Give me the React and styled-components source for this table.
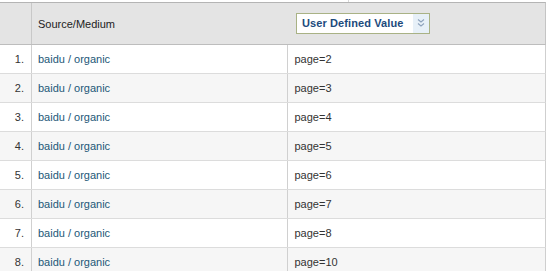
import React from "react";
import styled, { createGlobalStyle } from "styled-components";

const Global = createGlobalStyle`
  html, body { margin: 0; padding: 0; background: #fff; }
  body { font-family: "Liberation Sans", Arial, sans-serif; font-size: 11px; color: #333; }
`;

const Wrap = styled.div`
  width: 546px;
`;

const TopStrip = styled.div`
  height: 2px;
  display: flex;
`;

const Tick = styled.div`
  margin-left: 348px;
  width: 1px;
  height: 2px;
  background: #d8d8d8;
`;

const Header = styled.div`
  display: flex;
  height: 43px;
  box-sizing: border-box;
  background: #e4e4e4;
  border-top: 1px solid #b4b4b4;
  border-bottom: 1px solid #bdbdbd;
  border-right: 1px solid #c4c4c4;
`;

const HeadNum = styled.div`
  width: 32px;
  box-sizing: border-box;
  border-right: 1px solid #c8c8c8;
`;

const HeadCell = styled.div`
  width: ${(p) => p.$w}px;
  box-sizing: border-box;
  display: flex;
  align-items: center;
  padding-left: ${(p) => p.$pl}px;
  color: #222;
`;

const Picker = styled.div`
  display: flex;
  align-items: stretch;
  height: 21px;
  box-sizing: border-box;
  border: 1px solid #a9b285;
  background: #fff;
  margin-top: -1px;
`;

const PickerLabel = styled.span`
  display: flex;
  align-items: center;
  padding: 0 10px 0 5px;
  font-weight: bold;
  color: #1c4a7c;
  font-size: 11px;
  letter-spacing: 0.1px;
`;

const PickerBtn = styled.span`
  width: 16px;
  background: #e7f0f8;
  display: flex;
  align-items: center;
  justify-content: center;
`;

const Row = styled.div`
  display: flex;
  height: 29px;
  box-sizing: border-box;
  border-bottom: 1px solid #dcdcdc;
  border-right: 1px solid #cfcfcf;
  background: ${(p) => (p.$alt ? "#f6f6f6" : "#fff")};
`;

const NumCell = styled.div`
  width: 32px;
  box-sizing: border-box;
  border-right: 1px solid #d0d0d0;
  display: flex;
  align-items: center;
  justify-content: flex-end;
  padding-right: 7px;
  color: #333;
`;

const Cell = styled.div`
  width: 257px;
  box-sizing: border-box;
  border-right: ${(p) => (p.$last ? "none" : "1px solid #d0d0d0")};
  display: flex;
  align-items: center;
  padding-left: 6px;
  color: ${(p) => (p.$link ? "#1d5878" : "#333")};
`;

const rows = [2, 3, 4, 5, 6, 7, 8, 10];

export default function App() {
  return (
    <>
      <Global />
      <Wrap>
        <TopStrip>
          <Tick />
        </TopStrip>
        <Header>
          <HeadNum />
          <HeadCell $w={257} $pl={6}>Source/Medium</HeadCell>
          <HeadCell $w={256} $pl={7}>
            <Picker>
              <PickerLabel>User Defined Value</PickerLabel>
              <PickerBtn>
                <svg width="8" height="10" viewBox="0 0 8 10">
                  <path d="M1 1.5 L4 4 L7 1.5 M1 5.5 L4 8 L7 5.5" fill="none" stroke="#8ea3bd" strokeWidth="1.1" />
                </svg>
              </PickerBtn>
            </Picker>
          </HeadCell>
        </Header>
        {rows.map((p, i) => (
          <Row key={p} $alt={i % 2 === 1}>
            <NumCell>{i + 1}.</NumCell>
            <Cell $link>baidu / organic</Cell>
            <Cell $last>page={p}</Cell>
          </Row>
        ))}
      </Wrap>
    </>
  );
}
